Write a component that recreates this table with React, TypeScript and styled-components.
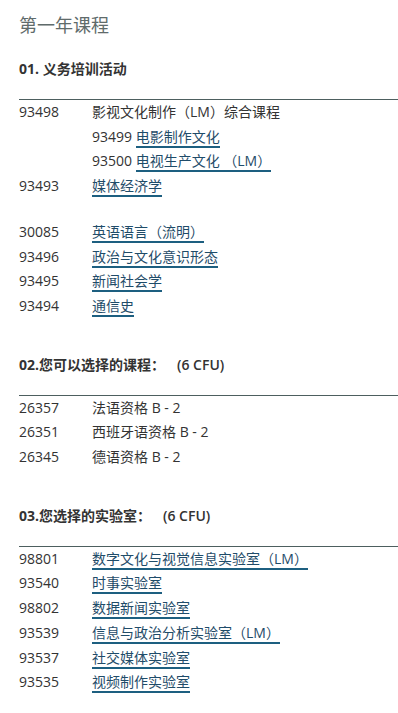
import React from 'react';
import styled, { createGlobalStyle } from 'styled-components';

const GlobalStyle = createGlobalStyle`
  body {
    margin: 0;
    background: #ffffff;
    font-family: 'Open Sans', 'Noto Sans CJK SC', sans-serif;
    color: #333333;
  }
`;

interface Course {
  code?: string;
  name: string;
  link?: boolean;
  sub?: boolean;
}

interface Group {
  heading: string;
  credits?: string;
  rows: Course[][];
}

const Page = styled.div`
  padding: 12px 0 30px 19px;
`;

const Title = styled.h1`
  margin: 0 0 21px;
  font-size: 18px;
  line-height: 26px;
  font-weight: 400;
  color: #5f6b6b;
`;

const Section = styled.section`
  & + & {
    margin-top: 36px;
  }
`;

const Heading = styled.h2`
  margin: 0 0 20px;
  font-size: 14px;
  line-height: 20px;
  font-weight: 700;
  color: #333333;
`;

const Credits = styled.span`
  margin-left: 12px;
  font-weight: 600;
`;

const Table = styled.div`
  border-top: 1px solid #4d5f5f;
`;

const Block = styled.div`
  & + & {
    margin-top: 21px;
  }
`;

const Row = styled.div`
  display: grid;
  grid-template-columns: 73px 1fr;
  font-size: 14px;
  line-height: 24.7px;
`;

const Code = styled.span`
  color: #333333;
`;

const Name = styled.span`
  color: #333333;
`;

const Link = styled.a`
  color: #1f4c69;
  text-decoration: none;
  border-bottom: 2px solid #1d5f80;
`;

const groups: Group[] = [
  {
    heading: '01. 义务培训活动',
    rows: [
      [
        { code: '93498', name: '影视文化制作（LM）综合课程' },
        { code: '93499', name: '电影制作文化', link: true, sub: true },
        { code: '93500', name: '电视生产文化 （LM）', link: true, sub: true },
        { code: '93493', name: '媒体经济学', link: true },
      ],
      [
        { code: '30085', name: '英语语言（流明）', link: true },
        { code: '93496', name: '政治与文化意识形态', link: true },
        { code: '93495', name: '新闻社会学', link: true },
        { code: '93494', name: '通信史', link: true },
      ],
    ],
  },
  {
    heading: '02.您可以选择的课程：',
    credits: '(6 CFU)',
    rows: [
      [
        { code: '26357', name: '法语资格 B - 2' },
        { code: '26351', name: '西班牙语资格 B - 2' },
        { code: '26345', name: '德语资格 B - 2' },
      ],
    ],
  },
  {
    heading: '03.您选择的实验室：',
    credits: '(6 CFU)',
    rows: [
      [
        { code: '98801', name: '数字文化与视觉信息实验室（LM）', link: true },
        { code: '93540', name: '时事实验室', link: true },
        { code: '98802', name: '数据新闻实验室', link: true },
        { code: '93539', name: '信息与政治分析实验室（LM）', link: true },
        { code: '93537', name: '社交媒体实验室', link: true },
        { code: '93535', name: '视频制作实验室', link: true },
      ],
    ],
  },
];

function CourseRow({ course }: { course: Course }) {
  const label = course.link ? <Link href="#">{course.name}</Link> : <Name>{course.name}</Name>;
  if (course.sub) {
    return (
      <Row>
        <span />
        <span>
          <Code>{course.code}</Code> {label}
        </span>
      </Row>
    );
  }
  return (
    <Row>
      <Code>{course.code}</Code>
      <span>{label}</span>
    </Row>
  );
}

export default function App() {
  return (
    <Page>
      <GlobalStyle />
      <Title>第一年课程</Title>
      {groups.map(g => (
        <Section key={g.heading}>
          <Heading>
            {g.heading}
            {g.credits && <Credits>{g.credits}</Credits>}
          </Heading>
          <Table>
            {g.rows.map((block, i) => (
              <Block key={i}>
                {block.map(c => (
                  <CourseRow key={c.code} course={c} />
                ))}
              </Block>
            ))}
          </Table>
        </Section>
      ))}
    </Page>
  );
}
